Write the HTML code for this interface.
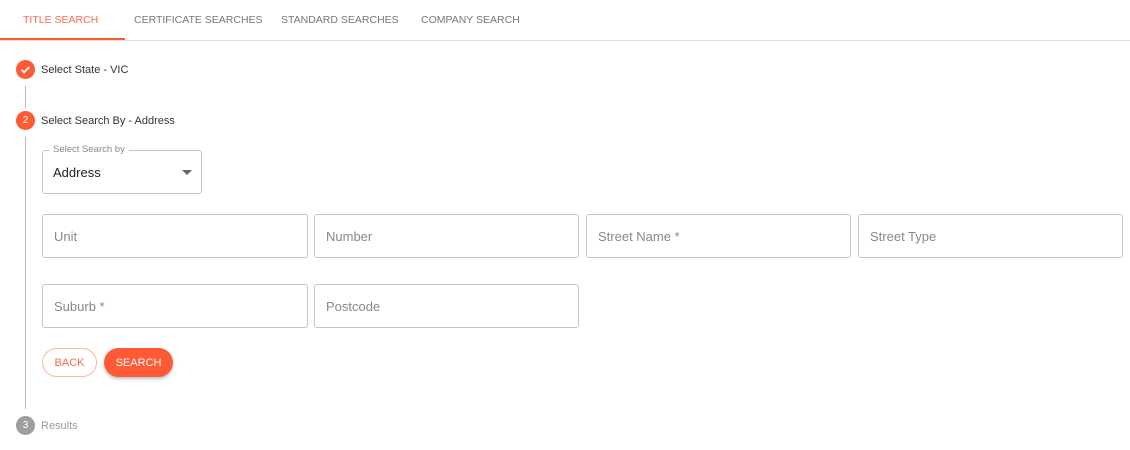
<html><head><style>
body{margin:0;width:1130px;height:450px;background:#fff;font-family:"Liberation Sans",sans-serif;position:relative;overflow:hidden}
.a{position:absolute}
.tab{position:absolute;top:14px;font-size:10.5px;color:#777;letter-spacing:0}
.c{position:absolute;width:19px;height:19px;border-radius:50%;background:#ff5a36;color:#fff;font-size:10px;text-align:center;line-height:19px}
.lbl{position:absolute;font-size:11px;color:#333}
.in{position:absolute;border:1px solid #c4c4c4;border-radius:3px;box-sizing:border-box;height:44px;width:266px;font-size:13px;color:#888;padding:14px 0 0 11px}
.btn{position:absolute;top:348px;height:29px;border-radius:15px;box-sizing:border-box;font-size:11px;text-align:center;line-height:29px}
</style></head><body>
<div class="tab" style="left:23px;color:#ff6a4d">TITLE SEARCH</div>
<div class="tab" style="left:134px">CERTIFICATE SEARCHES</div>
<div class="tab" style="left:281px">STANDARD SEARCHES</div>
<div class="tab" style="left:421px">COMPANY SEARCH</div>
<div class="a" style="left:0;top:40px;width:1130px;height:1px;background:#e0e0e0"></div>
<div class="a" style="left:0;top:38px;width:125px;height:2px;background:#ff5a36"></div>

<div class="c" style="left:16px;top:60px"><svg width="19" height="19" viewBox="0 0 19 19"><path d="M5.5 9.8l2.6 2.6 5.2-5.4" fill="none" stroke="#fff" stroke-width="1.8"/></svg></div>
<div class="lbl" style="left:41px;top:64px">Select State - VIC</div>
<div class="a" style="left:25px;top:86px;width:1px;height:22px;background:#bbb"></div>
<div class="c" style="left:16px;top:111px">2</div>
<div class="lbl" style="left:41px;top:115px">Select Search By - Address</div>
<div class="a" style="left:25px;top:137px;width:1px;height:272px;background:#bbb"></div>

<div class="a" style="left:42px;top:150px;width:160px;height:44px;border:1px solid #c4c4c4;border-radius:3px;box-sizing:border-box"></div>
<div class="a" style="left:49px;top:144px;background:#fff;padding:0 4px;font-size:9.5px;color:#888">Select Search by</div>
<div class="a" style="left:53px;top:165px;font-size:13px;color:#222">Address</div>
<div class="a" style="left:182px;top:170px;width:0;height:0;border-left:5px solid transparent;border-right:5px solid transparent;border-top:5px solid #666"></div>

<div class="in" style="left:42px;top:214px">Unit</div>
<div class="in" style="left:314px;top:214px;width:265px">Number</div>
<div class="in" style="left:586px;top:214px;width:265px">Street Name *</div>
<div class="in" style="left:858px;top:214px;width:265px">Street Type</div>
<div class="in" style="left:42px;top:284px">Suburb *</div>
<div class="in" style="left:314px;top:284px;width:265px">Postcode</div>

<div class="btn" style="left:42px;width:55px;border:1px solid #ffb7a6;color:#ff6a4d;line-height:28px">BACK</div>
<div class="btn" style="left:104px;width:69px;background:#ff5a36;color:#fff;box-shadow:0 2px 3px rgba(0,0,0,.25);line-height:30px">SEARCH</div>

<div class="c" style="left:16px;top:416px;background:#9e9e9e">3</div>
<div class="lbl" style="left:41px;top:420px;color:#999">Results</div>
</body></html>
